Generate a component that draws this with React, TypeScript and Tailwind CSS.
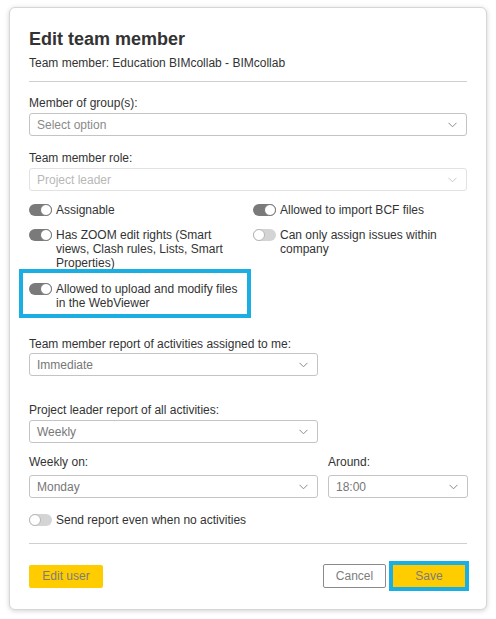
import React from "react";

function Toggle({ on }: { on?: boolean }) {
    return (
        <span
            className={
                on
                    ? "relative mt-[1px] block h-[12px] w-[23px] shrink-0 rounded-full bg-[#7a7a7a]"
                    : "relative mt-[1px] block h-[12px] w-[23px] shrink-0 rounded-full bg-[#d4d4d4]"
            }
        >
            <span
                className={
                    on
                        ? "absolute right-0 top-0 h-[12px] w-[12px] rounded-full border border-[#7a7a7a] bg-white"
                        : "absolute left-0 top-0 h-[12px] w-[12px] rounded-full border border-[#b5b5b5] bg-white"
                }
            />
        </span>
    );
}

function ToggleRow({ on, children }: { on?: boolean; children: React.ReactNode }) {
    return (
        <div className="flex items-start gap-[4px] text-[12px] leading-[14px] text-[#333]">
            <Toggle on={on} />
            <span>{children}</span>
        </div>
    );
}

function Chevron({ light }: { light?: boolean }) {
    return (
        <svg width="9" height="6" viewBox="0 0 9 6" className="shrink-0">
            <path
                d="M0.5 0.8 L4.5 4.8 L8.5 0.8"
                fill="none"
                stroke={light ? "#c8c8c8" : "#8a8a8a"}
                strokeWidth="1"
            />
        </svg>
    );
}

function Select({
    value,
    width,
    disabled,
    placeholder,
}: {
    value: string;
    width: string;
    disabled?: boolean;
    placeholder?: boolean;
}) {
    return (
        <div
            className={
                (disabled ? "border-[#e2e2e2] text-[#b8b8b8] " : "border-[#c4c4c4] ") +
                (placeholder ? "text-[#8a8a8a] " : disabled ? "" : "text-[#777] ") +
                width +
                " flex h-[23px] items-center justify-between rounded-[3px] border bg-white pl-[7px] pr-[9px] text-[12px]"
            }
        >
            <span>{value}</span>
            <Chevron light={disabled} />
        </div>
    );
}

function Label({ children, className = "" }: { children: React.ReactNode; className?: string }) {
    return <div className={"text-[12px] leading-4 text-[#333] " + className}>{children}</div>;
}

export default function App() {
    return (
        <div className="min-h-screen bg-white font-['Liberation_Sans',Arial,sans-serif]">
            <div className="ml-[9px] mt-[7px] w-[478px] rounded-[6px] border border-[#d6d6d6] bg-white px-[19px] pb-[18px] pt-[20px] shadow-[0_1px_5px_rgba(0,0,0,0.18)]">
                {/* Header */}
                <h1 className="text-[18px] font-bold leading-[22px] text-[#333]">Edit team member</h1>
                <p className="mt-[5px] text-[12px] leading-4 text-[#333]">
                    Team member: Education BIMcollab - BIMcollab
                </p>
                <div className="mt-[10px] border-t border-[#cfcfcf]" />

                {/* Groups & role */}
                <Label className="mt-[13px]">Member of group(s):</Label>
                <div className="mt-[2px]">
                    <Select value="Select option" width="w-full" placeholder />
                </div>

                <Label className="mt-[14px]">Team member role:</Label>
                <div className="mt-[2px]">
                    <Select value="Project leader" width="w-full" disabled />
                </div>

                {/* Rights */}
                <div className="mt-[12px] flex gap-[8px]">
                    <div className="flex w-[216px] flex-col">
                        <ToggleRow on>Assignable</ToggleRow>
                        <div className="mt-[11px]">
                            <ToggleRow on>
                                Has ZOOM edit rights (Smart views, Clash rules, Lists, Smart Properties)
                            </ToggleRow>
                        </div>
                        <div className="-ml-[10px] mt-[-1px] w-[232px] border-4 border-[#1aaee3] pb-[4px] pl-[6px] pr-[2px] pt-[9px]">
                            <ToggleRow on>Allowed to upload and modify files in the WebViewer</ToggleRow>
                        </div>
                    </div>
                    <div className="flex w-[216px] flex-col">
                        <ToggleRow on>Allowed to import BCF files</ToggleRow>
                        <div className="mt-[11px]">
                            <ToggleRow>Can only assign issues within company</ToggleRow>
                        </div>
                    </div>
                </div>

                {/* Reports */}
                <Label className="mt-[18px]">Team member report of activities assigned to me:</Label>
                <div className="mt-[1px]">
                    <Select value="Immediate" width="w-[289px]" />
                </div>

                <Label className="mt-[26px]">Project leader report of all activities:</Label>
                <div className="mt-[2px]">
                    <Select value="Weekly" width="w-[289px]" />
                </div>

                <div className="mt-[11px] flex gap-[10px]">
                    <div>
                        <Label>Weekly on:</Label>
                        <div className="mt-[5px]">
                            <Select value="Monday" width="w-[289px]" />
                        </div>
                    </div>
                    <div>
                        <Label>Around:</Label>
                        <div className="mt-[5px]">
                            <Select value="18:00" width="w-[140px]" />
                        </div>
                    </div>
                </div>

                <div className="mt-[15px]">
                    <ToggleRow>Send report even when no activities</ToggleRow>
                </div>

                <div className="mt-[16px] border-t border-[#cfcfcf]" />

                {/* Footer buttons */}
                <div className="mt-[17px] flex items-center justify-between">
                    <button className="h-[23px] w-[74px] rounded-[2px] bg-[#ffcc00] text-[12px] text-[#7d7d7d]">
                        Edit user
                    </button>
                    <div className="-mr-[2px] flex items-center gap-[3px]">
                        <button className="h-[24px] w-[63px] rounded-[2px] border border-[#8a8a8a] bg-white text-[12px] text-[#7d7d7d]">
                            Cancel
                        </button>
                        <div className="border-4 border-[#1aaee3]">
                            <button className="block h-[22px] w-[72px] bg-[#ffcc00] text-[12px] text-[#7d7d7d]">
                                Save
                            </button>
                        </div>
                    </div>
                </div>
            </div>
        </div>
    );
}
